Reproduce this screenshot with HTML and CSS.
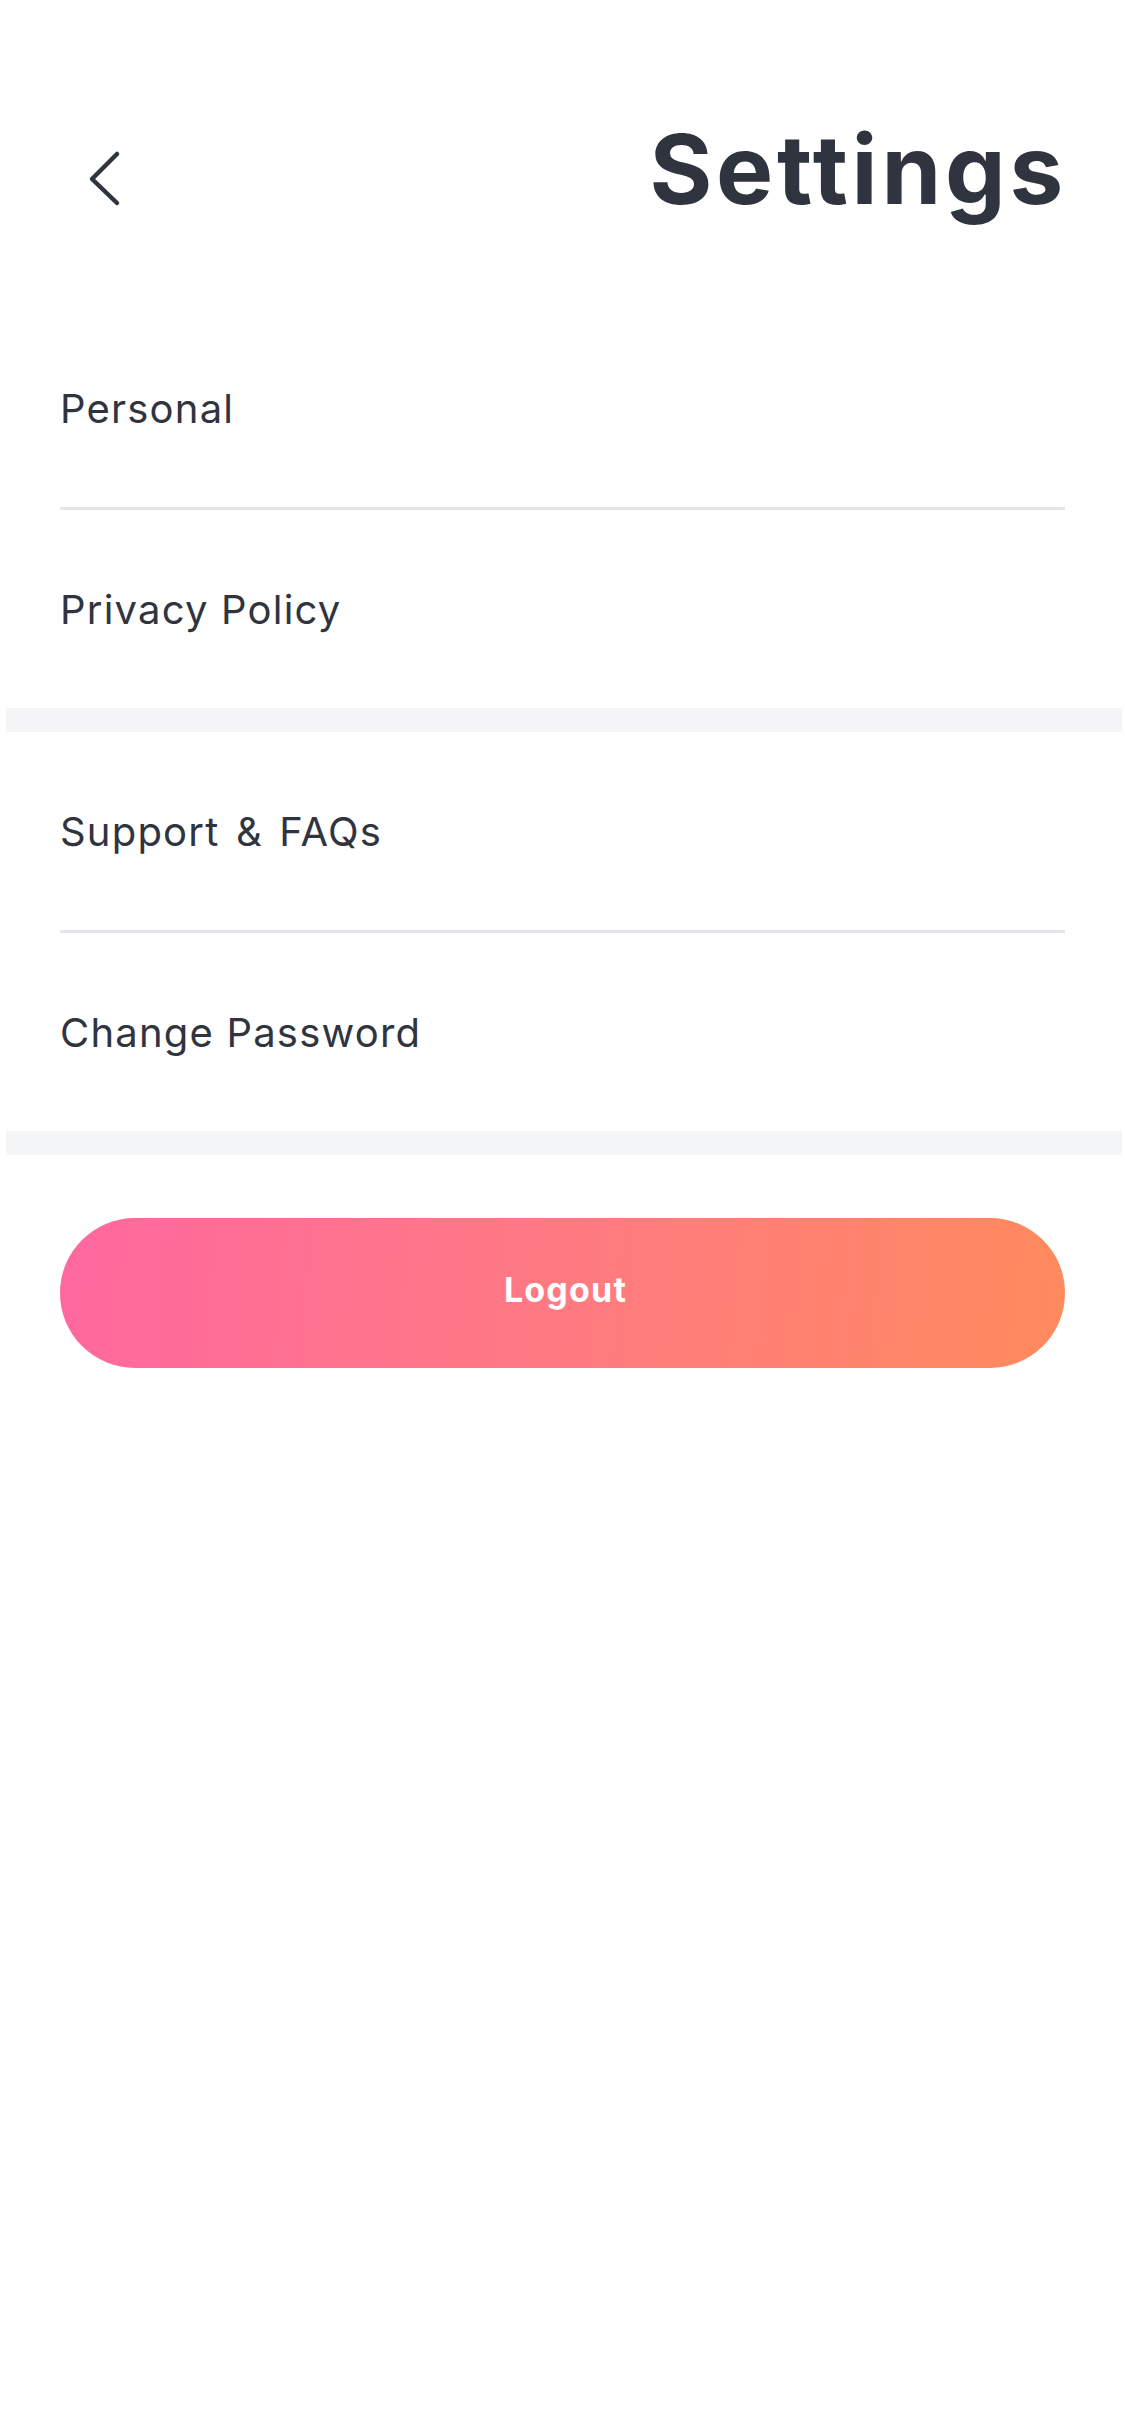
FILE: index.html
```html
<!DOCTYPE html>
<html lang="en">
<head>
<meta charset="utf-8">
<title>Settings</title>
<link rel="stylesheet" href="styles.css">
</head>
<body>
<div class="screen">
  <header class="header">
    <button class="back" aria-label="Back">
      <svg width="36" height="60" viewBox="0 0 36 60" fill="none">
        <path d="M29 4 L4 29 L29 53" stroke="#30343f" stroke-width="4.5" stroke-linecap="round" stroke-linejoin="round"/>
      </svg>
    </button>
    <h1 class="title">Settings</h1>
  </header>

  <section class="group">
    <div class="row">Personal</div>
    <div class="row">Privacy Policy</div>
  </section>
  <div class="band"></div>
  <section class="group">
    <div class="row">Support <span class="amp">&amp;</span> FAQs</div>
    <div class="row">Change Password</div>
  </section>
  <div class="band"></div>

  <div class="actions">
    <button class="logout">Logout</button>
  </div>
</div>
</body>
</html>
```

FILE: styles.css
```css
* { box-sizing: border-box; }

html, body {
  margin: 0;
  padding: 0;
  background: #ffffff;
}

body {
  font-family: Inter, "Noto Sans", "Liberation Sans", sans-serif;
  color: #30343f;
}

.screen {
  width: 1125px;
  min-height: 2436px;
  background: #ffffff;
}

.header {
  height: 309px;
  display: flex;
  justify-content: space-between;
  align-items: flex-start;
  padding: 121px 58px 0 88px;
}

.back {
  margin: 29px 0 0 0;
  padding: 0;
  border: 0;
  background: none;
  width: 36px;
  height: 60px;
  display: block;
}

.back svg { display: block; }

.title {
  margin: 0;
  font-size: 96px;
  line-height: 96px;
  font-weight: 700;
  letter-spacing: 3.8px;
  color: #30343f;
}

.group {
  margin: 0 60px;
}

.row {
  height: 198px;
  display: flex;
  align-items: center;
  white-space: pre;
  font-size: 40px;
  letter-spacing: 1.2px;
  font-weight: 400;
  color: #30343f;
}

.amp {
  margin: 0 4px;
}

.row + .row {
  border-top: 3px solid #e3e5ea;
  height: 201px;
}

.band {
  height: 24px;
  margin: 0 3px 0 6px;
  background: #f4f5f7;
}

.actions {
  padding: 63px 60px 0;
}

.logout {
  width: 100%;
  height: 150px;
  border: 0;
  border-radius: 75px;
  background: linear-gradient(95deg, #ff689f 0%, #ff7a82 50%, #ff8a5d 100%);
  color: #ffffff;
  font-family: Inter, "Noto Sans", "Liberation Sans", sans-serif;
  font-size: 34px;
  font-weight: 700;
  letter-spacing: 1.2px;
  display: flex;
  align-items: center;
  justify-content: center;
  padding: 0 0 7px 6px;
}
```
